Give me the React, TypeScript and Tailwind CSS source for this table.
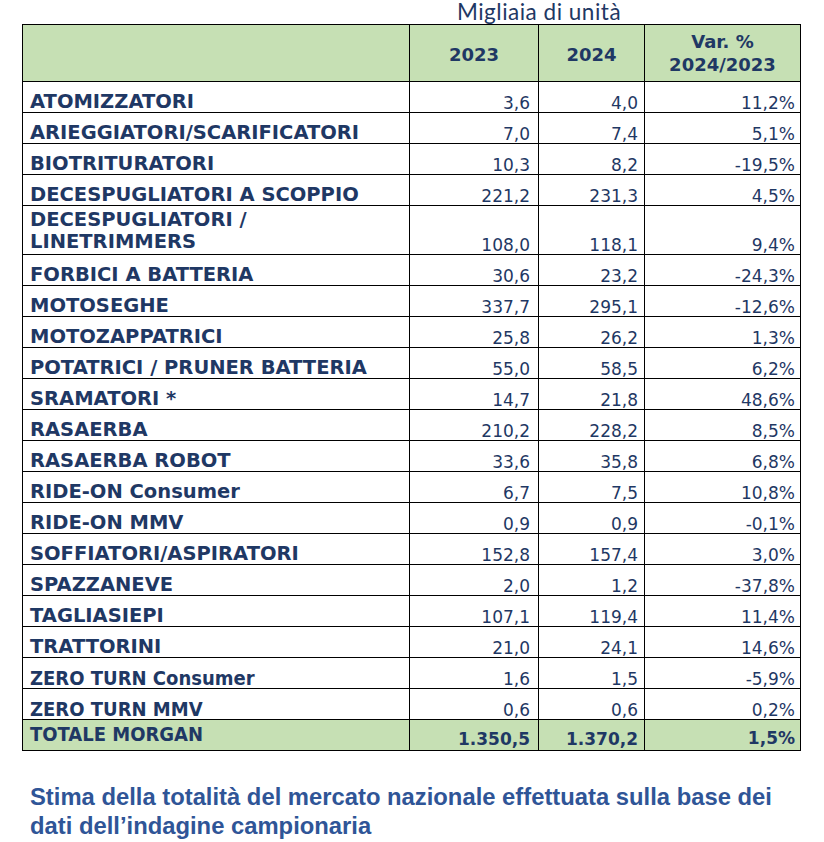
import React from "react";

type Row = { label: string; a: string; b: string; c: string; tall?: boolean; narrow?: boolean };

const rows: Row[] = [
  { label: "ATOMIZZATORI", a: "3,6", b: "4,0", c: "11,2%" },
  { label: "ARIEGGIATORI/SCARIFICATORI", a: "7,0", b: "7,4", c: "5,1%" },
  { label: "BIOTRITURATORI", a: "10,3", b: "8,2", c: "-19,5%" },
  { label: "DECESPUGLIATORI A SCOPPIO", a: "221,2", b: "231,3", c: "4,5%" },
  { label: "DECESPUGLIATORI /\nLINETRIMMERS", a: "108,0", b: "118,1", c: "9,4%", tall: true },
  { label: "FORBICI A BATTERIA", a: "30,6", b: "23,2", c: "-24,3%" },
  { label: "MOTOSEGHE", a: "337,7", b: "295,1", c: "-12,6%" },
  { label: "MOTOZAPPATRICI", a: "25,8", b: "26,2", c: "1,3%" },
  { label: "POTATRICI / PRUNER BATTERIA", a: "55,0", b: "58,5", c: "6,2%" },
  { label: "SRAMATORI *", a: "14,7", b: "21,8", c: "48,6%" },
  { label: "RASAERBA", a: "210,2", b: "228,2", c: "8,5%" },
  { label: "RASAERBA ROBOT", a: "33,6", b: "35,8", c: "6,8%" },
  { label: "RIDE-ON Consumer", a: "6,7", b: "7,5", c: "10,8%" },
  { label: "RIDE-ON MMV", a: "0,9", b: "0,9", c: "-0,1%" },
  { label: "SOFFIATORI/ASPIRATORI", a: "152,8", b: "157,4", c: "3,0%" },
  { label: "SPAZZANEVE", a: "2,0", b: "1,2", c: "-37,8%" },
  { label: "TAGLIASIEPI", a: "107,1", b: "119,4", c: "11,4%" },
  { label: "TRATTORINI", a: "21,0", b: "24,1", c: "14,6%" },
  { label: "ZERO TURN Consumer", a: "1,6", b: "1,5", c: "-5,9%", narrow: true },
  { label: "ZERO TURN MMV", a: "0,6", b: "0,6", c: "0,2%", narrow: true },
];

const grid = "grid grid-cols-[387px_129px_106px_156px]";

function DataRow({ r }: { r: Row }) {
  return (
    <div className={`${grid} ${r.tall ? "h-[49px]" : "h-[31px]"} border-t border-black`}>
      <div
        className={`border-l border-black pl-[7px] flex items-end font-bold whitespace-pre ${
          r.tall ? "leading-[22px] pb-[1px]" : "leading-[20px]"
        } ${
          r.narrow
            ? "text-[20px] font-['DejaVu_Sans_Condensed',sans-serif]"
            : "text-[19.5px] font-['DejaVu_Sans',Verdana,sans-serif]"
        }`}
      >
        {r.label}
      </div>
      <div className="border-l border-black pr-[8px] flex items-end justify-end text-[17px] leading-[18px]">{r.a}</div>
      <div className="border-l border-black pr-[6px] flex items-end justify-end text-[17px] leading-[18px]">{r.b}</div>
      <div className="border-l border-black pr-[5px] flex items-end justify-end text-[17px] leading-[18px]">{r.c}</div>
    </div>
  );
}

export default function App() {
  return (
    <div className="w-[824px] h-[842px] bg-white text-[#1f3864] font-['DejaVu_Sans',Verdana,sans-serif]">
      <div className="h-[24px] pl-[457px] pt-[1px] text-[22.5px] leading-[22px] tracking-[0.5px] text-[#1f3864] font-['Lato','Open_Sans',sans-serif]">
        Migliaia di unità
      </div>
      <div className="ml-[22px] w-[779px] border-r border-b border-black">
        <div className={`${grid} h-[57px] bg-[#c6e0b4] border-t border-black font-bold text-[18px]`}>
          <div className="border-l border-black" />
          <div className="border-l border-black flex items-center justify-center pt-[2px]">2023</div>
          <div className="border-l border-black flex items-center justify-center pt-[2px]">2024</div>
          <div className="border-l border-black flex flex-col items-center justify-center leading-[23px]">
            <span>Var. %</span>
            <span>2024/2023</span>
          </div>
        </div>
        {rows.map((r) => (
          <DataRow key={r.label} r={r} />
        ))}
        <div className={`${grid} h-[31px] bg-[#c6e0b4] border-t border-black font-bold`}>
          <div className="border-l border-black pl-[7px] flex items-end pb-[6px] text-[20px] leading-[20px] font-['DejaVu_Sans_Condensed',sans-serif]">
            TOTALE MORGAN
          </div>
          <div className="border-l border-black pr-[8px] flex items-end justify-end pb-[2px] text-[17px] leading-[18px]">1.350,5</div>
          <div className="border-l border-black pr-[6px] flex items-end justify-end pb-[2px] text-[17px] leading-[18px]">1.370,2</div>
          <div className="border-l border-black pr-[5px] flex items-end justify-end pb-[3px] text-[17px] leading-[18px]">1,5%</div>
        </div>
      </div>
      <div className="mt-[31px] ml-[30px] w-[756px] text-[23.8px] leading-[29px] font-bold text-[#2f5597] font-['Liberation_Sans',Arial,sans-serif]">
        Stima della totalità del mercato nazionale effettuata sulla base dei dati dell’indagine campionaria
      </div>
    </div>
  );
}
